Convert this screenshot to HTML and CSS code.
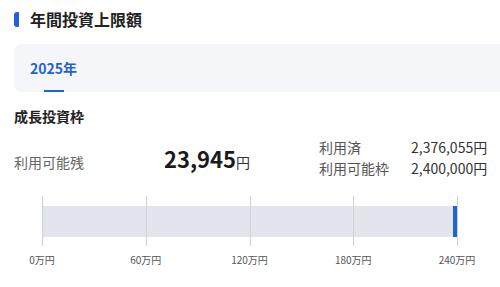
FILE: index.html
```html
<!DOCTYPE html>
<html lang="ja">
<head>
  <meta charset="UTF-8" />
  <meta name="viewport" content="width=device-width, initial-scale=1.0"/>
  <title>年間投資上限額</title>
  <link rel="stylesheet" href="styles.css">
</head>
<body>

  <h2 class="title">年間投資上限額</h2>

  <div class="tabs">
    <div class="tab active">2025年</div>
  </div>

  <section class="frame">
    <h3 class="frame-name">成長投資枠</h3>

    <div class="summary">
      <div class="remain">
        <span class="remain-label">利用可能残</span>
        <span class="remain-value">23,945<small>円</small></span>
      </div>
      <dl class="detail">
        <dt>利用済</dt><dd>2,376,055円</dd>
        <dt>利用可能枠</dt><dd>2,400,000円</dd>
      </dl>
    </div>

    <div class="chart">
      <div class="plot">
        <div class="bar">
          <!-- remaining share: 23,945 / 2,400,000 -->
          <div class="bar-rest" style="width: 1%"></div>
        </div>
        <span class="tick" style="left: 0%"></span>
        <span class="tick" style="left: 25%"></span>
        <span class="tick" style="left: 50%"></span>
        <span class="tick" style="left: 75%"></span>
        <span class="tick" style="left: 100%"></span>
      </div>
      <div class="axis">
        <span style="left: 0%">0万円</span>
        <span style="left: 25%">60万円</span>
        <span style="left: 50%">120万円</span>
        <span style="left: 75%">180万円</span>
        <span style="left: 100%">240万円</span>
      </div>
    </div>
  </section>

</body>
</html>
```

FILE: styles.css
```css
* {
  box-sizing: border-box;
  margin: 0;
  padding: 0;
}

html {
  overflow: hidden;
}

body {
  font-family: 'Noto Sans CJK JP', 'Noto Sans', sans-serif;
  color: #222;
  background: #fff;
  padding: 10px 0 0 14px;
}

.title {
  display: flex;
  align-items: center;
  gap: 11px;
  font-size: 16px;
  font-weight: bold;
  line-height: 18px;
}

.title::before {
  content: '';
  width: 5px;
  height: 15px;
  border-radius: 3px 1px 1px 3px;
  background: #1f63d8;
}

.tabs {
  display: flex;
  margin: 16px -20px 0 0;
  height: 48px;
  padding-left: 16px;
  background: #f5f6f9;
  border-radius: 8px;
}

.tab {
  position: relative;
  display: flex;
  align-items: center;
  font-size: 14px;
  font-weight: bold;
  color: #1f63d8;
}

.tab.active::after {
  content: '';
  position: absolute;
  left: 50%;
  bottom: 0;
  width: 20px;
  height: 2px;
  margin-left: -10px;
  background: #1f63d8;
}

.frame-name {
  margin-top: 15px;
  font-size: 14px;
  font-weight: bold;
  line-height: 18px;
}

.summary {
  display: flex;
  align-items: center;
  margin-top: 13px;
}

.remain {
  display: flex;
  align-items: baseline;
  width: 305px;
}

.remain-label {
  width: 150px;
  font-size: 14px;
  color: #666;
}

.remain-value {
  font-size: 22px;
  font-weight: bold;
  color: #1a1a1a;
}

.remain-value small {
  font-size: 14px;
  font-weight: normal;
  color: #333;
}

.detail {
  display: grid;
  grid-template-columns: auto auto;
  column-gap: 22px;
  row-gap: 2px;
  font-size: 14px;
  line-height: 19px;
  white-space: nowrap;
}

.detail dt {
  color: #555;
}

.detail dd {
  text-align: right;
  color: #333;
}

.chart {
  margin: 18px 43px 0 28px;
}

.plot {
  position: relative;
  height: 50px;
  padding-top: 10px;
}

.bar {
  display: flex;
  justify-content: flex-end;
  height: 31px;
  background: #e3e5ed;
}

.bar-rest {
  background: #1f63d8;
}

.tick {
  position: absolute;
  top: 0;
  bottom: 0;
  width: 1px;
  background: #cfd1d6;
}

.axis {
  position: relative;
  height: 20px;
  margin-top: 7px;
}

.axis span {
  position: absolute;
  top: 0;
  transform: translateX(-50%);
  font-size: 10px;
  line-height: 14px;
  color: #555;
  white-space: nowrap;
}
```
